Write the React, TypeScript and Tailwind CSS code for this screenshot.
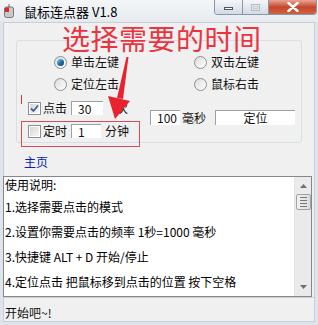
const FONT = { fontFamily: '"Noto Sans CJK SC", "Noto Sans", sans-serif' };

function Radio({ checked }: { checked?: boolean }) {
  return (
    <span className="w-[13px] h-[13px] rounded-full border border-[#8e8f8f] bg-gradient-to-br from-[#dcdcdc] to-[#ffffff] flex items-center justify-center shrink-0">
      {checked && (
        <span className="w-[7px] h-[7px] rounded-full bg-gradient-to-br from-[#8fd0f0] via-[#1d76b0] to-[#0e3f6a]" />
      )}
    </span>
  );
}

function Check({ checked }: { checked?: boolean }) {
  return (
    <span className="w-[13px] h-[13px] border border-[#8f8f8f] bg-white p-[1px] shrink-0">
      <span className="w-full h-full bg-gradient-to-br from-[#d6d6d6] to-[#f8f8f8] flex items-center justify-center">
        {checked && (
          <svg width="9" height="9" viewBox="0 0 9 9">
            <path d="M1 4.5 L3.5 7 L8 1.5" stroke="#4a5f97" strokeWidth="1.8" fill="none" />
          </svg>
        )}
      </span>
    </span>
  );
}

function Field({ w, h, value, center }: { w: string; h: string; value: string; center?: boolean }) {
  return (
    <span
      className={`${w} ${h} bg-white border-t border-l border-[#a0a0a0] border-r-[#f4f4f4] border-b-[#f4f4f4] text-[12px] leading-none flex items-center ${
        center ? "justify-center" : "pl-[6px]"
      }`}
    >
      {value}
    </span>
  );
}

export default function App() {
  return (
    <div
      className="relative w-[318px] h-[325px] bg-[#dfe4ea] flex flex-col overflow-hidden text-[#111]"
      style={FONT}
    >
      {/* title bar */}
      <div className="h-[22px] flex items-start justify-between bg-gradient-to-b from-[#f4f6f8] to-[#e6eaee]">
        <div className="flex items-center h-[22px] pl-[4px] gap-[10px]">
          <svg width="10" height="14" viewBox="0 0 10 14">
            <rect x="0.5" y="3" width="9" height="10.5" rx="2" fill="#c9c9c9" stroke="#777" />
            <rect x="1" y="3.5" width="4" height="4.5" fill="#e3262b" />
            <path d="M5 0 Q5 2 5 3" stroke="#666" fill="none" />
          </svg>
          <span className="text-[13px] leading-none text-black">鼠标连点器 V1.8</span>
        </div>
        <div className="flex mr-[1px] h-[15px] rounded-b-[4px] border border-t-0 border-[#8a97a8] overflow-hidden">
          <span className="w-[28px] h-full bg-gradient-to-b from-[#f4f6f9] to-[#d4dbe4] border-r border-[#8a97a8] flex items-center justify-center">
            <span className="w-[9px] h-[3px] mt-[3px] border border-[#4d5566] bg-white" />
          </span>
          <span className="w-[26px] h-full bg-gradient-to-b from-[#f4f6f9] to-[#d4dbe4] border-r border-[#8a97a8] flex items-center justify-center">
            <span className="w-[9px] h-[7px] border border-[#b6bcc6] flex items-center justify-center">
              <span className="w-[5px] h-[3px] border border-[#c7ccd3]" />
            </span>
          </span>
          <span className="w-[47px] h-full bg-gradient-to-b from-[#e8a493] via-[#c7452c] to-[#d0623f] flex items-center justify-center">
            <svg width="12" height="10" viewBox="0 0 12 10">
              <path d="M1.5 1 L10.5 9 M10.5 1 L1.5 9" stroke="#fff" strokeWidth="2.4" strokeLinecap="round" />
            </svg>
          </span>
        </div>
      </div>

      {/* client area */}
      <div className="mx-[3px] h-[300px] bg-[#f0f0f0] border border-[#c9ced6] flex flex-col">
        <div className="pl-[12px] pt-[17px]">
          <div className="w-[286px] h-[103px] border border-[#d5dfe5] rounded-[3px] flex flex-col">
            <div className="flex h-[14px] items-center mt-[14px] pl-[37px] text-[12px] leading-none">
              <span className="w-[140px] flex items-center gap-[4px]">
                <Radio checked />
                单击左键
              </span>
              <span className="flex items-center gap-[4px]">
                <Radio />
                双击左键
              </span>
            </div>
            <div className="flex h-[14px] items-center mt-[8px] pl-[37px] text-[12px] leading-none">
              <span className="w-[140px] flex items-center gap-[4px]">
                <Radio />
                定位左击
              </span>
              <span className="flex items-center gap-[4px]">
                <Radio />
                鼠标右击
              </span>
            </div>
            <div className="flex mt-[10px] text-[12px] leading-none">
              <div className="w-[133px] pl-[11px] flex flex-col gap-[9px]">
                <div className="flex items-center h-[14px]">
                  <Check checked />
                  <span className="ml-[2px] w-[28px]">点击</span>
                  <Field w="w-[32px]" h="h-[14px]" value="30" />
                  <span className="ml-[13px]">次</span>
                </div>
                <div className="flex items-center h-[14px]">
                  <Check />
                  <span className="ml-[2px] w-[28px]">定时</span>
                  <Field w="w-[30px]" h="h-[14px]" value="1" />
                  <span className="ml-[4px]">分钟</span>
                </div>
              </div>
              <div className="flex items-center h-[15px] mt-[9px]">
                <Field w="w-[30px]" h="h-[15px]" value="100" />
                <span className="ml-[2px] w-[33px]">毫秒</span>
                <Field w="w-[80px]" h="h-[15px]" value="定位" center />
              </div>
            </div>
          </div>
        </div>

        <div className="pl-[20px] mt-[12px] h-[14px] text-[12px] leading-[14px] text-[#0b1bb8]">主页</div>

        <div className="mt-[7px] ml-[-1px] w-[309px] h-[121px] bg-white border border-[#828790] flex">
          <div className="flex-1 pl-[1px] pt-[1px] text-[12px] text-black">
            <div className="leading-[14px]">使用说明:</div>
            <div className="mt-[2px] leading-[25px]">1.选择需要点击的模式</div>
            <div className="leading-[25px]">2.设置你需要点击的频率 1秒=1000 毫秒</div>
            <div className="leading-[25px]">3.快捷键 ALT + D 开始/停止</div>
            <div className="leading-[25px]">4.定位点击 把鼠标移到点击的位置 按下空格</div>
          </div>
          <div className="w-[17px] bg-[#eaeaea] border-l border-[#e4e4e4] flex flex-col items-center">
            <svg width="7" height="4" viewBox="0 0 7 4" className="mt-[7px]">
              <path d="M0 4 L3.5 0 L7 4 Z" fill="#707070" />
            </svg>
            <div className="mt-[6px] w-[15px] h-[16px] rounded-[2px] border border-[#9da3ab] bg-gradient-to-r from-[#f1f1f1] to-[#dcdcdc] flex flex-col items-center justify-center gap-[2px]">
              <span className="w-[7px] h-[1px] bg-[#777]" />
              <span className="w-[7px] h-[1px] bg-[#777]" />
              <span className="w-[7px] h-[1px] bg-[#777]" />
              <span className="w-[7px] h-[1px] bg-[#777]" />
            </div>
            <div className="flex-1" />
            <svg width="7" height="4" viewBox="0 0 7 4" className="mb-[7px]">
              <path d="M0 0 L3.5 4 L7 0 Z" fill="#707070" />
            </svg>
          </div>
        </div>

        <div className="flex-1 flex items-end pl-[1px] pb-[1px] text-[12px] leading-[14px] border-t border-[#d0d0d0]">
          开始吧~!
        </div>
      </div>

      {/* red annotations */}
      <div className="absolute left-[62px] top-[25px] text-[28px] leading-[27px] tracking-[0.5px] text-[#ec3440] pointer-events-none">
        选择需要的时间
      </div>
      <div className="absolute left-[21px] top-[121px] w-[119px] h-[26px] border border-[#dd4a57] pointer-events-none" />
      <div className="absolute left-[21px] top-[95px] w-[1px] h-[9px] bg-[#e0303a]" />
      <svg className="absolute left-0 top-0 pointer-events-none" width="318" height="325" viewBox="0 0 318 325">
        <path d="M126.5 57 L128.5 57 L123 99 L117 98 Z" fill="#e8232f" />
        <path d="M108 96 L130 101 L115 119 Z" fill="#e8232f" />
      </svg>
    </div>
  );
}
